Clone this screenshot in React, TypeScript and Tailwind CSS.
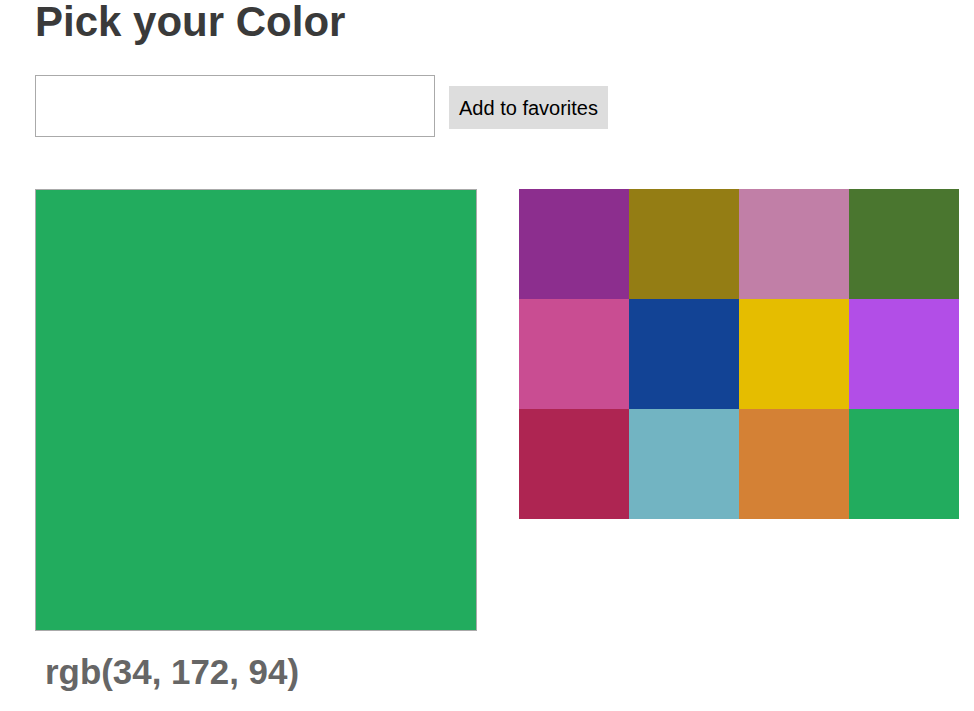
import { useState } from "react";

const FAVORITES = [
  "#8c2e8e",
  "#947d14",
  "#c17fa7",
  "#4a762f",
  "#c94d92",
  "#124395",
  "#e5bd00",
  "#b24ee7",
  "#ae2552",
  "#72b4c2",
  "#d48135",
  "#22ac5e",
];

export default function App() {
  const [value, setValue] = useState("");
  const current = { r: 34, g: 172, b: 94 };
  const rgb = `rgb(${current.r}, ${current.g}, ${current.b})`;

  return (
    <div className="min-h-screen bg-white pl-[35px]" style={{ fontFamily: "'Liberation Sans', Arial, sans-serif" }}>
      <h1 className="text-[42px] leading-[48px] -mt-[2px] -mb-[2px] font-bold text-[#3a3a3a]">Pick your Color</h1>

      <div className="mt-[31px] flex items-start gap-[14px]">
        <input
          value={value}
          onChange={(e) => setValue(e.target.value)}
          className="w-[400px] h-[62px] border border-[#aaaaaa] bg-white px-3 text-xl outline-none"
        />
        <button className="mt-[11px] h-[43px] px-[10px] bg-[#dddddd] text-[20px] text-black">Add to favorites</button>
      </div>

      <div className="mt-[52px] flex items-start gap-[42px]">
        <div>
          {/* Current color */}
          <div className="w-[442px] h-[442px] border border-[#aaaaaa]" style={{ backgroundColor: rgb }} />
          <p className="mt-[21px] pl-[10px] text-[34.9px] leading-[40px] font-bold text-[#666666]">{rgb}</p>
        </div>

        <div className="grid grid-cols-[repeat(4,110px)] grid-rows-[repeat(3,110px)]">
          {FAVORITES.map((c) => (
            <div key={c} className="w-[110px] h-[110px]" style={{ backgroundColor: c }} />
          ))}
        </div>
      </div>
    </div>
  );
}
